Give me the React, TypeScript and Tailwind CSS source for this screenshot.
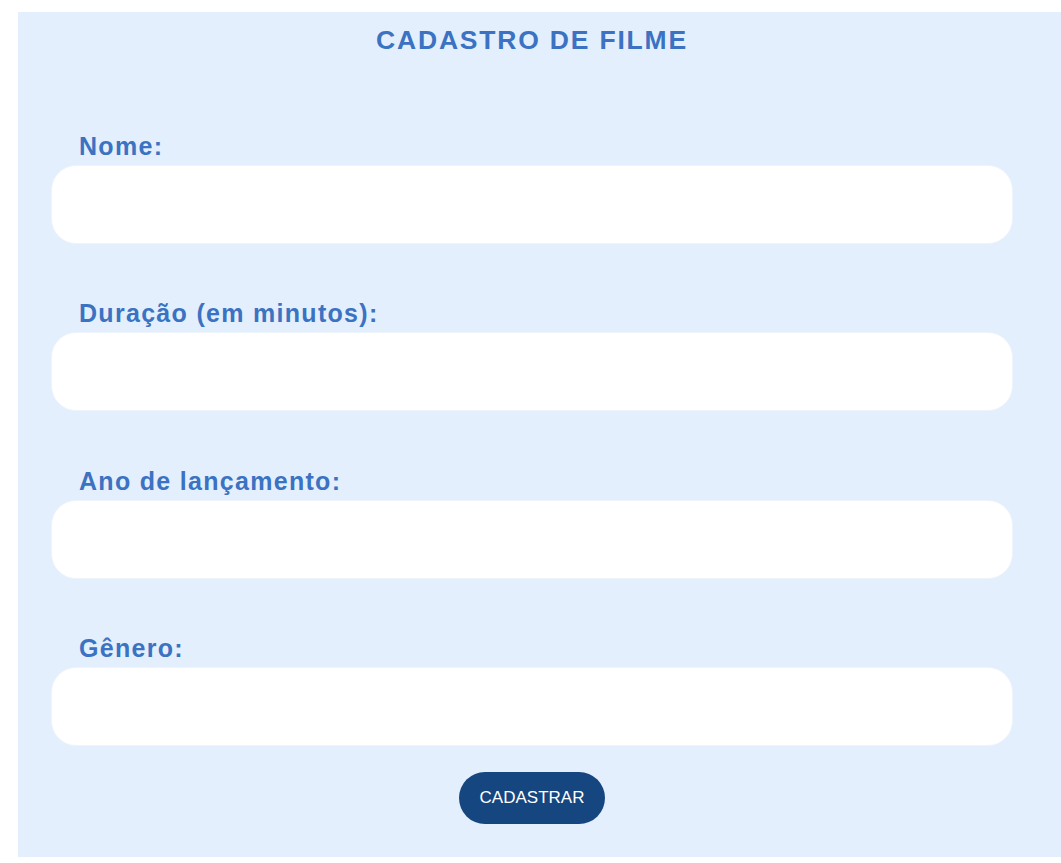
export default function App() {
  const campos = ["Nome:", "Duração (em minutos):", "Ano de lançamento:", "Gênero:"]

  return (
    <div className="min-h-screen bg-white pt-[12px] pl-[18px] pb-[6px] font-['Liberation_Sans',Arial,sans-serif]">
      <form
        className="h-[845px] w-[1043px] bg-[#e3effd] pt-[13px]"
        onSubmit={(e) => e.preventDefault()}
      >
        <div className="flex w-[1028px] flex-col">
          <h1 className="text-center text-[26.5px] leading-[30px] font-bold tracking-[1.8px] text-[#3b72c2]">
            CADASTRO DE FILME
          </h1>

          <div className="mt-[77px] flex flex-col">
            {campos.map((campo) => (
              <label key={campo} className="mb-[55.3px] flex flex-col last:mb-0">
                <span className="pl-[61px] text-[25px] leading-[28px] font-bold tracking-[1.3px] text-[#3b72c2]">
                  {campo}
                </span>
                <input
                  type="text"
                  className="mt-[5px] ml-[33px] h-[79px] w-[962px] rounded-[25px] border border-[#eef4fc] bg-white px-6 outline-none"
                />
              </label>
            ))}
          </div>

          <button
            type="submit"
            className="mx-auto mt-[26px] h-[52px] w-[146px] rounded-full bg-[#15467f] text-[17px] text-white"
          >
            CADASTRAR
          </button>
        </div>
      </form>
    </div>
  )
}
